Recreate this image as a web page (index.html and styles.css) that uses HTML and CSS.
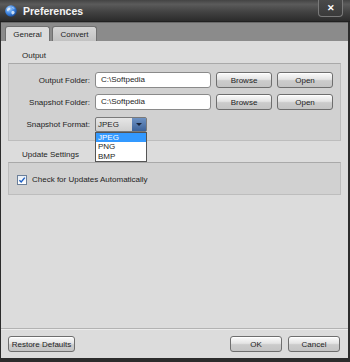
FILE: index.html
```html
<!DOCTYPE html>
<html lang="en">
<head>
  <meta charset="UTF-8">
  <title>Preferences</title>
  <link rel="stylesheet" href="styles.css">
</head>
<body>
  <div class="window">
    <div class="titlebar">
      <svg class="app-icon" viewBox="0 0 12 12" xmlns="http://www.w3.org/2000/svg">
        <defs>
          <radialGradient id="globe" cx="0.35" cy="0.3" r="0.8">
            <stop offset="0" stop-color="#a8d2ff"/>
            <stop offset="0.55" stop-color="#3a82e0"/>
            <stop offset="1" stop-color="#123c80"/>
          </radialGradient>
        </defs>
        <circle cx="6" cy="6" r="5.8" fill="url(#globe)"/>
        <path d="M3 3.2 C4.2 2.4 5.4 2.8 5.2 4 C5 5 3.6 4.8 3.4 6 C3.2 7 2.2 6.2 2 5 C1.9 4.2 2.4 3.6 3 3.2Z" fill="#e4f0fb" opacity="0.9"/>
        <path d="M6.8 6.2 C7.8 5.8 9.4 6.2 9.6 7.2 C9.8 8.4 8.4 9.6 7.4 9.4 C6.6 9.2 6.2 7.8 6.4 7Z" fill="#e4f0fb" opacity="0.85"/>
        <path d="M7 2.2 C8 2 9.2 2.6 9.6 3.6 C8.8 3.8 7.6 3.4 7 2.2Z" fill="#e4f0fb" opacity="0.75"/>
      </svg>
      <span class="title">Preferences</span>
      <div class="close">&#x2715;</div>
    </div>

    <div class="frame">
      <div class="tabbar">
        <div class="tab tab-active">General</div>
        <div class="tab">Convert</div>
      </div>

      <div class="content">
        <div class="section-label">Output</div>
        <div class="group group-output">
          <label class="field-label">Output Folder:</label>
          <div class="text-input">C:\Softpedia</div>
          <button class="btn">Browse</button>
          <button class="btn">Open</button>

          <label class="field-label">Snapshot Folder:</label>
          <div class="text-input">C:\Softpedia</div>
          <button class="btn">Browse</button>
          <button class="btn">Open</button>

          <label class="field-label">Snapshot Format:</label>
          <div class="select-wrap">
            <div class="select">
              <span class="select-value">JPEG</span>
              <span class="select-arrow"></span>
            </div>
            <ul class="dropdown">
              <li class="selected">JPEG</li>
              <li>PNG</li>
              <li>BMP</li>
            </ul>
          </div>
        </div>

        <div class="section-label">Update Settings</div>
        <div class="group group-update">
          <span class="checkbox">
            <svg viewBox="0 0 8 8" xmlns="http://www.w3.org/2000/svg">
              <path d="M1.4 4.2 L3.2 6 L6.8 1.6" fill="none" stroke="#1d5fc4" stroke-width="1.4"/>
            </svg>
          </span>
          <span>Check for Updates Automatically</span>
        </div>

        <div class="spacer"></div>

        <div class="footer">
          <button class="btn btn-restore">Restore Defaults</button>
          <div class="footer-right">
            <button class="btn btn-wide">OK</button>
            <button class="btn btn-wide">Cancel</button>
          </div>
        </div>
      </div>
    </div>
  </div>
</body>
</html>
```

FILE: styles.css
```css
:root {
  --frame: #2c2c2c;
  --tabbar: #8b8b8b;
  --content: #dcdcdc;
  --group: #d1d1d1;
  --group-border: #bdbdbd;
  --btn-border: #6e6e6e;
  --text: #1e1e1e;
  --highlight: #3399ff;
}

body {
  margin: 0;
  font-family: 'Liberation Sans', Arial, sans-serif;
  font-size: 8px;
  color: var(--text);
  background: var(--frame);
}

.window {
  width: 350px;
  height: 362px;
  display: flex;
  flex-direction: column;
  background: var(--frame);
}

.titlebar {
  height: 22px;
  display: flex;
  align-items: center;
  position: relative;
  background: linear-gradient(#444 0, #5b5b5b 20%, #404040 60%, #2b2b2b 100%);
  border-bottom: 1px solid #202020;
  box-sizing: border-box;
}

.app-icon {
  width: 12px;
  height: 12px;
  margin: 0 6px 0 5px;
}

.title {
  color: #f4f4f4;
  font-weight: bold;
  font-size: 10.5px;
}

.close {
  position: absolute;
  right: 7px;
  top: 0;
  width: 25px;
  height: 17px;
  box-sizing: border-box;
  border: 1px solid #7a7a7a;
  border-top: none;
  border-radius: 0 0 4px 4px;
  background: linear-gradient(#4a4a4a, #3a3a3a);
  color: #fff;
  font-size: 9px;
  font-weight: bold;
  display: flex;
  align-items: center;
  justify-content: center;
}

.frame {
  flex: 1;
  display: flex;
  flex-direction: column;
  margin: 0 2px 4px 1px;
}

.tabbar {
  height: 18px;
  background: var(--tabbar);
  display: flex;
  align-items: flex-end;
  gap: 2px;
  padding-left: 4px;
  border-top: 1px solid #6a6a6a;
}

.tab {
  width: 45px;
  height: 15px;
  box-sizing: border-box;
  border: 1px solid #707070;
  border-bottom: none;
  border-radius: 3px 3px 0 0;
  background: linear-gradient(#d6d6d6, #c2c2c2);
  display: flex;
  align-items: center;
  justify-content: center;
}

.tab-active {
  height: 16px;
  background: var(--content);
  margin-bottom: -1px;
}

.content {
  flex: 1;
  background: var(--content);
  display: flex;
  flex-direction: column;
  padding: 10px 7px 0 7px;
}

.section-label {
  margin-left: 14px;
  height: 12px;
  line-height: 10px;
}

.group {
  background: var(--group);
  border: 1px solid var(--group-border);
  border-top-color: #a9a9a9;
}

.group-output {
  height: 78px;
  box-sizing: border-box;
  padding-top: 8px;
  display: grid;
  grid-template-columns: 81px 116px 56px 56px;
  grid-auto-rows: 16px;
  column-gap: 5px;
  row-gap: 6px;
  align-items: center;
  margin-bottom: 9px;
}

.field-label {
  text-align: right;
}

.text-input {
  height: 16px;
  box-sizing: border-box;
  background: #fff;
  border: 1px solid #8a8a8a;
  border-radius: 3px;
  padding-left: 5px;
  line-height: 14px;
}

.btn {
  height: 16px;
  padding: 0;
  font-family: inherit;
  font-size: 8px;
  color: var(--text);
  border: 1px solid var(--btn-border);
  border-radius: 3px;
  background: linear-gradient(#fbfbfb, #e4e4e4 45%, #cbcbcb 55%, #c4c4c4);
  box-shadow: inset 0 1px #fff;
}

.select-wrap {
  position: relative;
  grid-column: span 3;
  height: 15px;
}

.select {
  width: 52px;
  height: 15px;
  box-sizing: border-box;
  display: flex;
  border: 1px solid #7a7a7a;
  border-radius: 2px;
  background: linear-gradient(#e6e6e6, #cfcfcf);
}

.select-value {
  flex: 1;
  padding-left: 2px;
  line-height: 13px;
}

.select-arrow {
  width: 14px;
  background: linear-gradient(#6f93c4, #3c6299);
  position: relative;
}

.select-arrow::after {
  content: "";
  position: absolute;
  left: 4px;
  top: 5px;
  border-left: 3px solid transparent;
  border-right: 3px solid transparent;
  border-top: 3px solid #18243a;
}

.dropdown {
  position: absolute;
  left: 0;
  top: 15px;
  width: 52px;
  box-sizing: border-box;
  margin: 0;
  padding: 0;
  list-style: none;
  background: #fff;
  border: 1px solid #555;
}

.dropdown li {
  height: 9.5px;
  line-height: 9.5px;
  padding-left: 2px;
}

.dropdown .selected {
  background: var(--highlight);
  color: #fff;
}

.group-update {
  height: 33px;
  box-sizing: border-box;
  display: flex;
  align-items: center;
  gap: 5px;
  padding: 2px 0 0 8px;
}

.checkbox {
  width: 8px;
  height: 8px;
  border: 1px solid #6b7f99;
  background: linear-gradient(#e8eef6, #ffffff);
  display: flex;
}

.checkbox svg {
  width: 8px;
  height: 8px;
}

.spacer {
  flex: 1;
}

.footer {
  border-top: 1px solid #b3b3b3;
  box-shadow: inset 0 1px #ececec;
  margin: 0 -7px;
  padding: 7px 8px 6px 7px;
  display: flex;
  justify-content: space-between;
}

.btn-restore {
  width: 67px;
}

.footer-right {
  display: flex;
  gap: 6px;
}

.btn-wide {
  width: 52px;
}
```
